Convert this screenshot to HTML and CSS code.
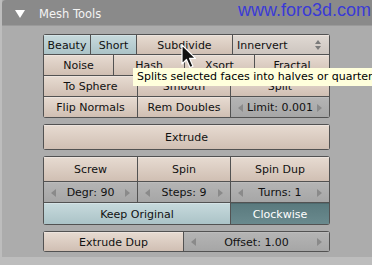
FILE: index.html
```html
<!DOCTYPE html>
<html>
<head>
    <meta charset="utf-8">
    <title>Mesh Tools</title>
    <link rel="stylesheet" href="styles.css">
</head>
<body>
    <div class="panel">
        <div class="panelHeader">
            <span class="collapseArrow"></span>
            <span class="panelTitle">Mesh Tools</span>
            <span class="siteUrl">www.foro3d.com</span>
        </div>
        <div class="panelBody">
            <div class="group">
                <div class="row rowTop">
                    <div class="btn toggleButton">Beauty</div>
                    <div class="btn toggleButton">Short</div>
                    <div class="btn">Subdivide</div>
                    <div class="btn menuButton">Innervert<span class="menuArrows"></span></div>
                </div>
                <div class="row rowFour">
                    <div class="btn">Noise</div>
                    <div class="btn">Hash</div>
                    <div class="btn">Xsort</div>
                    <div class="btn">Fractal</div>
                </div>
                <div class="row rowThree">
                    <div class="btn">To Sphere</div>
                    <div class="btn">Smooth</div>
                    <div class="btn">Split</div>
                </div>
                <div class="row rowThree">
                    <div class="btn">Flip Normals</div>
                    <div class="btn">Rem Doubles</div>
                    <div class="btn numField"><span class="arrowLeft"></span>Limit: 0.001<span class="arrowRight"></span></div>
                </div>
            </div>

            <div class="group groupGap8">
                <div class="row rowOne tall">
                    <div class="btn">Extrude</div>
                </div>
            </div>

            <div class="group">
                <div class="row rowThree tall">
                    <div class="btn">Screw</div>
                    <div class="btn">Spin</div>
                    <div class="btn">Spin Dup</div>
                </div>
                <div class="row rowThree">
                    <div class="btn numField"><span class="arrowLeft"></span>Degr: 90<span class="arrowRight"></span></div>
                    <div class="btn numField"><span class="arrowLeft"></span>Steps: 9<span class="arrowRight"></span></div>
                    <div class="btn numField"><span class="arrowLeft"></span>Turns: 1<span class="arrowRight"></span></div>
                </div>
                <div class="row rowTwoWide keepRow">
                    <div class="btn toggleButton">Keep Original</div>
                    <div class="btn pressedButton">Clockwise</div>
                </div>
            </div>

            <div class="group">
                <div class="row rowHalf">
                    <div class="btn">Extrude Dup</div>
                    <div class="btn numField"><span class="arrowLeft"></span>Offset: 1.00<span class="arrowRight"></span></div>
                </div>
            </div>
        </div>
    </div>

    <div class="tooltip">Splits selected faces into halves or quarters</div>
    <svg class="cursor" width="16" height="27" viewBox="0 0 16 27">
        <path d="M1 1 L1 20 L5.5 15.5 L9 23.5 L12 22.3 L8.6 14.4 L14.5 14.4 Z" fill="#111" stroke="#fff" stroke-width="1.2" stroke-linejoin="round"/>
    </svg>
</body>
</html>
```

FILE: styles.css
```css
* {
    box-sizing: border-box;
}

body {
    margin: 0;
    width: 372px;
    height: 265px;
    overflow: hidden;
    background-color: #bdbdbd;
    font-family: "DejaVu Sans", sans-serif;
    font-size: 11px;
    color: #111;
}

.panel {
    margin-left: 2px;
    height: 257px;
    background-color: #acacac;
}

.panelHeader {
    display: flex;
    align-items: center;
    height: 26px;
    padding-top: 2px;
    background-color: #8a8a8a;
    border-top-left-radius: 4px;
    border-bottom: 1px solid #9a9a9a;
}

.collapseArrow {
    width: 0;
    height: 0;
    margin-left: 13px;
    border-left: 5px solid transparent;
    border-right: 5px solid transparent;
    border-top: 8px solid #fff;
}

.panelTitle {
    margin-left: 14px;
    font-size: 11.5px;
    color: #f4f4f4;
}

.siteUrl {
    align-self: flex-start;
    margin-left: auto;
    margin-top: -2px;
    margin-right: 1px;
    font-family: "Liberation Sans", Arial, sans-serif;
    font-size: 18px;
    line-height: 20px;
    color: #3a3ad6;
}

.panelBody {
    padding-top: 8px;
    padding-left: 41px;
}

.group {
    display: grid;
    gap: 1px;
    width: 287px;
    padding: 1px;
    margin-bottom: 6px;
    background-color: #525252;
    border-radius: 3px;
    overflow: hidden;
}

.groupGap8 {
    margin-top: 2px;
}

.row {
    display: grid;
    gap: 1px;
    height: 20px;
}

.row:first-child {
    height: 19px;
}

.row.tall {
    height: 24px;
}

.row.keepRow {
    height: 21px;
}

.rowTop {
    grid-template-columns: 46px 45px 95px 96px;
}

.rowFour {
    grid-template-columns: 69px 70px 69px 74px;
}

.rowThree {
    grid-template-columns: 93px 92px 98px;
}

.rowOne {
    grid-template-columns: 285px;
}

.rowTwoWide {
    grid-template-columns: 186px 98px;
}

.rowHalf {
    grid-template-columns: 139px 145px;
}

.btn {
    display: flex;
    align-items: center;
    justify-content: center;
    white-space: nowrap;
    overflow: hidden;
    background: linear-gradient(#e6dad0, #d0bfb3);
    border-top: 1px solid #ede4de;
}

.toggleButton {
    background: linear-gradient(#c6d9dc, #abc3c7);
    border-top-color: #d4e3e6;
}

.pressedButton {
    background: linear-gradient(#5a7a7e, #6a8a8e);
    border-top-color: #4e6a6e;
    color: #fff;
}

.menuButton {
    justify-content: flex-start;
    padding-left: 4px;
    background: linear-gradient(#dfd8d2, #cdc5bf);
}

.menuArrows {
    position: relative;
    margin-left: auto;
    margin-right: 7px;
    width: 7px;
    height: 10px;
}

.menuArrows::before,
.menuArrows::after {
    content: "";
    position: absolute;
    left: 0;
    border-left: 3.5px solid transparent;
    border-right: 3.5px solid transparent;
}

.menuArrows::before {
    top: 0;
    border-bottom: 4px solid #7a7a7a;
}

.menuArrows::after {
    bottom: 0;
    border-top: 4px solid #7a7a7a;
}

.numField {
    justify-content: space-between;
    padding: 0 7px;
    background: linear-gradient(#b4b4b4, #a6a6a6);
    border-top-color: #bcbcbc;
}

.arrowLeft,
.arrowRight {
    width: 0;
    height: 0;
    border-top: 4px solid transparent;
    border-bottom: 4px solid transparent;
}

.arrowLeft {
    border-right: 5px solid #8a8a8a;
}

.arrowRight {
    border-left: 5px solid #8a8a8a;
}

.tooltip {
    position: absolute;
    left: 133px;
    top: 68px;
    width: 239px;
    height: 18px;
    padding-left: 4px;
    line-height: 18px;
    white-space: nowrap;
    overflow: hidden;
    background-color: #ffffdc;
    color: #000;
}

.cursor {
    position: absolute;
    left: 181px;
    top: 44px;
}
```
